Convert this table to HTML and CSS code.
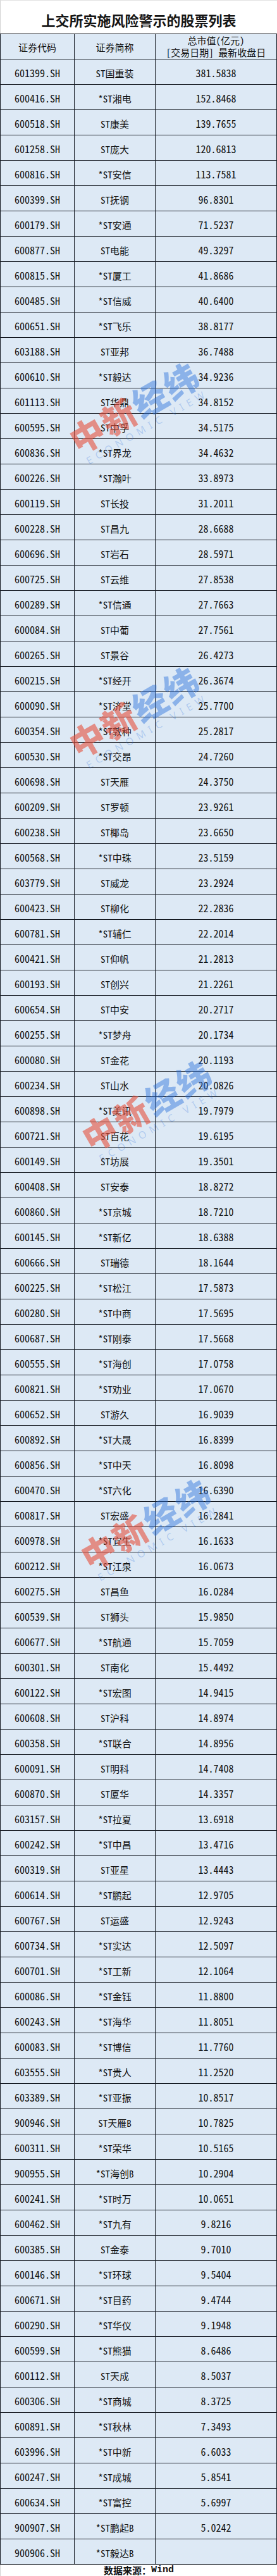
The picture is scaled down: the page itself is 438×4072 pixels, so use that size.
FILE: index.html
```html
<!DOCTYPE html>
<html lang="zh-CN">
<head>
<meta charset="utf-8">
<title>上交所实施风险警示的股票列表</title>
<link rel="stylesheet" href="styles.css">
</head>
<body>
<div class="page">
  <h1 class="title">上交所实施风险警示的股票列表</h1>
  <div class="table">
    <div class="row head"><div class="cell">证券代码</div><div class="cell">证券简称</div><div class="cell multi"><span>总市值(亿元)</span><span>[交易日期] 最新收盘日</span></div></div>
    <div class="row"><div class="cell">601399.SH</div><div class="cell">ST国重装</div><div class="cell">381.5838</div></div>
    <div class="row"><div class="cell">600416.SH</div><div class="cell">*ST湘电</div><div class="cell">152.8468</div></div>
    <div class="row"><div class="cell">600518.SH</div><div class="cell">ST康美</div><div class="cell">139.7655</div></div>
    <div class="row"><div class="cell">601258.SH</div><div class="cell">ST庞大</div><div class="cell">120.6813</div></div>
    <div class="row"><div class="cell">600816.SH</div><div class="cell">*ST安信</div><div class="cell">113.7581</div></div>
    <div class="row"><div class="cell">600399.SH</div><div class="cell">ST抚钢</div><div class="cell">96.8301</div></div>
    <div class="row"><div class="cell">600179.SH</div><div class="cell">*ST安通</div><div class="cell">71.5237</div></div>
    <div class="row"><div class="cell">600877.SH</div><div class="cell">ST电能</div><div class="cell">49.3297</div></div>
    <div class="row"><div class="cell">600815.SH</div><div class="cell">*ST厦工</div><div class="cell">41.8686</div></div>
    <div class="row"><div class="cell">600485.SH</div><div class="cell">*ST信威</div><div class="cell">40.6400</div></div>
    <div class="row"><div class="cell">600651.SH</div><div class="cell">*ST飞乐</div><div class="cell">38.8177</div></div>
    <div class="row"><div class="cell">603188.SH</div><div class="cell">ST亚邦</div><div class="cell">36.7488</div></div>
    <div class="row"><div class="cell">600610.SH</div><div class="cell">*ST毅达</div><div class="cell">34.9236</div></div>
    <div class="row"><div class="cell">601113.SH</div><div class="cell">ST华鼎</div><div class="cell">34.8152</div></div>
    <div class="row"><div class="cell">600595.SH</div><div class="cell">ST中孚</div><div class="cell">34.5175</div></div>
    <div class="row"><div class="cell">600836.SH</div><div class="cell">*ST界龙</div><div class="cell">34.4632</div></div>
    <div class="row"><div class="cell">600226.SH</div><div class="cell">*ST瀚叶</div><div class="cell">33.8973</div></div>
    <div class="row"><div class="cell">600119.SH</div><div class="cell">ST长投</div><div class="cell">31.2011</div></div>
    <div class="row"><div class="cell">600228.SH</div><div class="cell">ST昌九</div><div class="cell">28.6688</div></div>
    <div class="row"><div class="cell">600696.SH</div><div class="cell">ST岩石</div><div class="cell">28.5971</div></div>
    <div class="row"><div class="cell">600725.SH</div><div class="cell">ST云维</div><div class="cell">27.8538</div></div>
    <div class="row"><div class="cell">600289.SH</div><div class="cell">*ST信通</div><div class="cell">27.7663</div></div>
    <div class="row"><div class="cell">600084.SH</div><div class="cell">ST中葡</div><div class="cell">27.7561</div></div>
    <div class="row"><div class="cell">600265.SH</div><div class="cell">ST景谷</div><div class="cell">26.4273</div></div>
    <div class="row"><div class="cell">600215.SH</div><div class="cell">*ST经开</div><div class="cell">26.3674</div></div>
    <div class="row"><div class="cell">600090.SH</div><div class="cell">*ST济堂</div><div class="cell">25.7700</div></div>
    <div class="row"><div class="cell">600354.SH</div><div class="cell">*ST敦种</div><div class="cell">25.2817</div></div>
    <div class="row"><div class="cell">600530.SH</div><div class="cell">*ST交昂</div><div class="cell">24.7260</div></div>
    <div class="row"><div class="cell">600698.SH</div><div class="cell">ST天雁</div><div class="cell">24.3750</div></div>
    <div class="row"><div class="cell">600209.SH</div><div class="cell">ST罗顿</div><div class="cell">23.9261</div></div>
    <div class="row"><div class="cell">600238.SH</div><div class="cell">ST椰岛</div><div class="cell">23.6650</div></div>
    <div class="row"><div class="cell">600568.SH</div><div class="cell">*ST中珠</div><div class="cell">23.5159</div></div>
    <div class="row"><div class="cell">603779.SH</div><div class="cell">ST威龙</div><div class="cell">23.2924</div></div>
    <div class="row"><div class="cell">600423.SH</div><div class="cell">ST柳化</div><div class="cell">22.2836</div></div>
    <div class="row"><div class="cell">600781.SH</div><div class="cell">*ST辅仁</div><div class="cell">22.2014</div></div>
    <div class="row"><div class="cell">600421.SH</div><div class="cell">ST仰帆</div><div class="cell">21.2813</div></div>
    <div class="row"><div class="cell">600193.SH</div><div class="cell">ST创兴</div><div class="cell">21.2261</div></div>
    <div class="row"><div class="cell">600654.SH</div><div class="cell">ST中安</div><div class="cell">20.2717</div></div>
    <div class="row"><div class="cell">600255.SH</div><div class="cell">*ST梦舟</div><div class="cell">20.1734</div></div>
    <div class="row"><div class="cell">600080.SH</div><div class="cell">ST金花</div><div class="cell">20.1193</div></div>
    <div class="row"><div class="cell">600234.SH</div><div class="cell">ST山水</div><div class="cell">20.0826</div></div>
    <div class="row"><div class="cell">600898.SH</div><div class="cell">*ST美讯</div><div class="cell">19.7979</div></div>
    <div class="row"><div class="cell">600721.SH</div><div class="cell">ST百花</div><div class="cell">19.6195</div></div>
    <div class="row"><div class="cell">600149.SH</div><div class="cell">ST坊展</div><div class="cell">19.3501</div></div>
    <div class="row"><div class="cell">600408.SH</div><div class="cell">ST安泰</div><div class="cell">18.8272</div></div>
    <div class="row"><div class="cell">600860.SH</div><div class="cell">*ST京城</div><div class="cell">18.7210</div></div>
    <div class="row"><div class="cell">600145.SH</div><div class="cell">*ST新亿</div><div class="cell">18.6388</div></div>
    <div class="row"><div class="cell">600666.SH</div><div class="cell">ST瑞德</div><div class="cell">18.1644</div></div>
    <div class="row"><div class="cell">600225.SH</div><div class="cell">*ST松江</div><div class="cell">17.5873</div></div>
    <div class="row"><div class="cell">600280.SH</div><div class="cell">*ST中商</div><div class="cell">17.5695</div></div>
    <div class="row"><div class="cell">600687.SH</div><div class="cell">*ST刚泰</div><div class="cell">17.5668</div></div>
    <div class="row"><div class="cell">600555.SH</div><div class="cell">*ST海创</div><div class="cell">17.0758</div></div>
    <div class="row"><div class="cell">600821.SH</div><div class="cell">*ST劝业</div><div class="cell">17.0670</div></div>
    <div class="row"><div class="cell">600652.SH</div><div class="cell">ST游久</div><div class="cell">16.9039</div></div>
    <div class="row"><div class="cell">600892.SH</div><div class="cell">*ST大晟</div><div class="cell">16.8399</div></div>
    <div class="row"><div class="cell">600856.SH</div><div class="cell">*ST中天</div><div class="cell">16.8098</div></div>
    <div class="row"><div class="cell">600470.SH</div><div class="cell">*ST六化</div><div class="cell">16.6390</div></div>
    <div class="row"><div class="cell">600817.SH</div><div class="cell">ST宏盛</div><div class="cell">16.2841</div></div>
    <div class="row"><div class="cell">600978.SH</div><div class="cell">*ST宜生</div><div class="cell">16.1633</div></div>
    <div class="row"><div class="cell">600212.SH</div><div class="cell">*ST江泉</div><div class="cell">16.0673</div></div>
    <div class="row"><div class="cell">600275.SH</div><div class="cell">ST昌鱼</div><div class="cell">16.0284</div></div>
    <div class="row"><div class="cell">600539.SH</div><div class="cell">ST狮头</div><div class="cell">15.9850</div></div>
    <div class="row"><div class="cell">600677.SH</div><div class="cell">*ST航通</div><div class="cell">15.7059</div></div>
    <div class="row"><div class="cell">600301.SH</div><div class="cell">ST南化</div><div class="cell">15.4492</div></div>
    <div class="row"><div class="cell">600122.SH</div><div class="cell">*ST宏图</div><div class="cell">14.9415</div></div>
    <div class="row"><div class="cell">600608.SH</div><div class="cell">ST沪科</div><div class="cell">14.8974</div></div>
    <div class="row"><div class="cell">600358.SH</div><div class="cell">*ST联合</div><div class="cell">14.8956</div></div>
    <div class="row"><div class="cell">600091.SH</div><div class="cell">ST明科</div><div class="cell">14.7408</div></div>
    <div class="row"><div class="cell">600870.SH</div><div class="cell">ST厦华</div><div class="cell">14.3357</div></div>
    <div class="row"><div class="cell">603157.SH</div><div class="cell">*ST拉夏</div><div class="cell">13.6918</div></div>
    <div class="row"><div class="cell">600242.SH</div><div class="cell">*ST中昌</div><div class="cell">13.4716</div></div>
    <div class="row"><div class="cell">600319.SH</div><div class="cell">ST亚星</div><div class="cell">13.4443</div></div>
    <div class="row"><div class="cell">600614.SH</div><div class="cell">*ST鹏起</div><div class="cell">12.9705</div></div>
    <div class="row"><div class="cell">600767.SH</div><div class="cell">ST运盛</div><div class="cell">12.9243</div></div>
    <div class="row"><div class="cell">600734.SH</div><div class="cell">*ST实达</div><div class="cell">12.5097</div></div>
    <div class="row"><div class="cell">600701.SH</div><div class="cell">*ST工新</div><div class="cell">12.1064</div></div>
    <div class="row"><div class="cell">600086.SH</div><div class="cell">*ST金钰</div><div class="cell">11.8800</div></div>
    <div class="row"><div class="cell">600243.SH</div><div class="cell">*ST海华</div><div class="cell">11.8051</div></div>
    <div class="row"><div class="cell">600083.SH</div><div class="cell">*ST博信</div><div class="cell">11.7760</div></div>
    <div class="row"><div class="cell">603555.SH</div><div class="cell">*ST贵人</div><div class="cell">11.2520</div></div>
    <div class="row"><div class="cell">603389.SH</div><div class="cell">*ST亚振</div><div class="cell">10.8517</div></div>
    <div class="row"><div class="cell">900946.SH</div><div class="cell">ST天雁B</div><div class="cell">10.7825</div></div>
    <div class="row"><div class="cell">600311.SH</div><div class="cell">*ST荣华</div><div class="cell">10.5165</div></div>
    <div class="row"><div class="cell">900955.SH</div><div class="cell">*ST海创B</div><div class="cell">10.2904</div></div>
    <div class="row"><div class="cell">600241.SH</div><div class="cell">*ST时万</div><div class="cell">10.0651</div></div>
    <div class="row"><div class="cell">600462.SH</div><div class="cell">*ST九有</div><div class="cell">9.8216</div></div>
    <div class="row"><div class="cell">600385.SH</div><div class="cell">ST金泰</div><div class="cell">9.7010</div></div>
    <div class="row"><div class="cell">600146.SH</div><div class="cell">*ST环球</div><div class="cell">9.5404</div></div>
    <div class="row"><div class="cell">600671.SH</div><div class="cell">*ST目药</div><div class="cell">9.4744</div></div>
    <div class="row"><div class="cell">600290.SH</div><div class="cell">*ST华仪</div><div class="cell">9.1948</div></div>
    <div class="row"><div class="cell">600599.SH</div><div class="cell">*ST熊猫</div><div class="cell">8.6486</div></div>
    <div class="row"><div class="cell">600112.SH</div><div class="cell">ST天成</div><div class="cell">8.5037</div></div>
    <div class="row"><div class="cell">600306.SH</div><div class="cell">*ST商城</div><div class="cell">8.3725</div></div>
    <div class="row"><div class="cell">600891.SH</div><div class="cell">*ST秋林</div><div class="cell">7.3493</div></div>
    <div class="row"><div class="cell">603996.SH</div><div class="cell">*ST中新</div><div class="cell">6.6033</div></div>
    <div class="row"><div class="cell">600247.SH</div><div class="cell">*ST成城</div><div class="cell">5.8541</div></div>
    <div class="row"><div class="cell">600634.SH</div><div class="cell">*ST富控</div><div class="cell">5.6997</div></div>
    <div class="row"><div class="cell">900907.SH</div><div class="cell">*ST鹏起B</div><div class="cell">5.0242</div></div>
    <div class="row"><div class="cell">900906.SH</div><div class="cell">*ST毅达B</div><div class="cell"></div></div>
  </div>
  <p class="source">数据来源：<span class="en">Wind</span></p>

  <div class="wm wm-1"><div class="wm-cn"><span class="red">中新</span><span class="blue">经纬</span></div><div class="wm-en">ECONOMIC VIEW</div></div>
  <div class="wm wm-2"><div class="wm-cn"><span class="red">中新</span><span class="blue">经纬</span></div><div class="wm-en">ECONOMIC VIEW</div></div>
  <div class="wm wm-3"><div class="wm-cn"><span class="red">中新</span><span class="blue">经纬</span></div><div class="wm-en">ECONOMIC VIEW</div></div>
  <div class="wm wm-4"><div class="wm-cn"><span class="red">中新</span><span class="blue">经纬</span></div><div class="wm-en">ECONOMIC VIEW</div></div>
</div>
</body>
</html>
```
FILE: styles.css
```css
html, body {
  margin: 0;
  padding: 0;
  background: #ffffff;
}

.page {
  position: relative;
  width: 438px;
  overflow: hidden;
  font-family: "Noto Sans Mono CJK SC", "Liberation Mono", "Noto Sans CJK SC", monospace;
  color: #111111;
}

.title {
  margin: 0;
  height: 53px;
  box-sizing: border-box;
  padding-top: 7px;
  display: flex;
  align-items: center;
  justify-content: center;
  font-family: "Noto Sans CJK SC", sans-serif;
  font-size: 22px;
  font-weight: 700;
  color: #151515;
  border-left: 1px solid #d4d4d4;
  border-top: 1px solid #e2e2e2;
}

.table {
  border-top: 1px solid #151a22;
  border-left: 1px solid #151a22;
  background: #dde9f5;
}

.row {
  display: grid;
  grid-template-columns: 117px 128px 192px;
  height: 40px;
}

.cell {
  box-sizing: border-box;
  border-right: 1px solid #151a22;
  border-bottom: 1px solid #151a22;
  display: flex;
  align-items: center;
  justify-content: center;
  padding-top: 3px;
  font-size: 16px;
  white-space: nowrap;
}

.row .cell:nth-child(2) {
  font-size: 15px;
}

.head .cell {
  font-family: "Noto Sans CJK SC", sans-serif;
  font-size: 15px;
  padding-top: 1px;
}

.head .multi {
  flex-direction: column;
  justify-content: flex-start;
  padding-top: 0;
  line-height: 19px;
}

.head .multi span {
  font-family: "Noto Sans Mono CJK SC", "Noto Sans CJK SC", sans-serif;
}

.source {
  margin: 0;
  height: 18px;
  box-sizing: border-box;
  display: flex;
  align-items: center;
  justify-content: center;
  font-family: "Noto Sans CJK SC", sans-serif;
  font-size: 15px;
  font-weight: 700;
  line-height: 18px;
  color: #111;
  border-left: 1px solid #d4d4d4;
}

.source .en {
  font-family: "Liberation Mono", monospace;
  font-weight: 700;
}

/* watermark overlays */
.wm {
  position: absolute;
  transform: translate(-50%, -50%) rotate(-30deg);
  text-align: center;
  pointer-events: none;
  white-space: nowrap;
}

.wm-1 { left: 216px; top: 652px; }
.wm-2 { left: 216px; top: 1133px; }
.wm-3 { left: 236px; top: 1755px; }
.wm-4 { left: 234px; top: 2417px; }

.wm-cn {
  font-family: "Noto Sans CJK SC", sans-serif;
  font-weight: 900;
  font-size: 54px;
  line-height: 56px;
  letter-spacing: 3px;
  padding-left: 3px;
}

.wm-cn .red { color: rgba(230, 80, 60, 0.6); }
.wm-cn .blue { color: rgba(40, 110, 220, 0.45); }

.wm-en {
  font-family: "Noto Sans", sans-serif;
  font-size: 16px;
  line-height: 20px;
  letter-spacing: 7px;
  padding-left: 7px;
  color: rgba(40, 110, 220, 0.25);
}
```
